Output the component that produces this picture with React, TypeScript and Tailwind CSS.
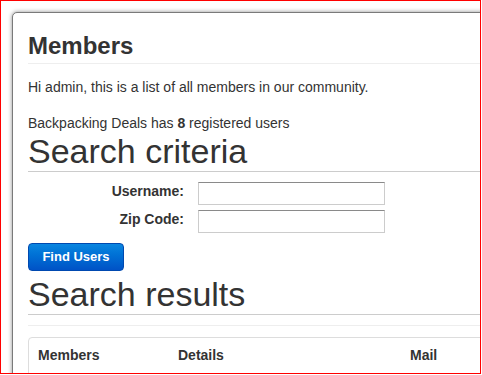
import React from "react";

export default function App() {
  return (
    <div
      className="w-[481px] h-[374px] border border-[#ff0000] overflow-hidden bg-white pt-[11px] pl-[11px] text-[#333]"
      style={{ fontFamily: '"Liberation Sans", Arial, sans-serif' }}
    >
      <div className="w-[540px] h-[400px] border border-[#7a7a7a] rounded-tl-[5px] shadow-[0_0_4px_rgba(0,0,0,0.45)] pl-[15px] bg-white">
        <h3 className="mt-[21px] text-[24px] leading-[24px] font-bold pb-[5px] border-b border-[#eeeeee]">
          Members
        </h3>
        <p className="mt-[13px] text-[14px] leading-[20px]">
          Hi admin, this is a list of all members in our community.
        </p>
        <p className="mt-[16px] text-[14px] leading-[20px]">
          Backpacking Deals has <b>8</b> registered users
        </p>
        <h2 className="mt-[1px] text-[34px] leading-[34px] font-normal pb-[3px] border-b border-[#cccccc]">
          Search criteria
        </h2>
        <div className="mt-[10px] flex flex-col gap-[5px]">
          <div className="flex items-start gap-[14px]">
            <label className="w-[156px] text-right text-[14px] leading-[18px] font-bold">
              Username:
            </label>
            <input
              type="text"
              className="w-[187px] h-[23px] border border-[#cccccc] border-t-[#8a8a8a] bg-white outline-none"
            />
          </div>
          <div className="flex items-start gap-[14px]">
            <label className="w-[156px] text-right text-[14px] leading-[18px] font-bold">
              Zip Code:
            </label>
            <input
              type="text"
              className="w-[187px] h-[23px] border border-[#cccccc] border-t-[#8a8a8a] bg-white outline-none"
            />
          </div>
        </div>
        <button className="mt-[10px] w-[96px] h-[28px] rounded-[4px] border border-[#0049b0] bg-gradient-to-b from-[#0b86e0] to-[#0052c6] text-white text-[13px] font-bold leading-[18px] flex items-center justify-center">
          Find Users
        </button>
        <h2 className="mt-[6px] text-[34px] leading-[34px] font-normal pb-[3px] border-b border-[#cccccc]">
          Search results
        </h2>
        <div className="mt-[10px] border-t border-[#eeeeee]" />
        <div className="mt-[11px] border border-[#dddddd] rounded-[4px] pt-[7px] pl-[9px] h-[60px]">
          <div className="grid grid-cols-[140px_232px_100px] text-[14px] leading-[20px] font-bold">
            <div>Members</div>
            <div>Details</div>
            <div>Mail</div>
          </div>
        </div>
      </div>
    </div>
  );
}
